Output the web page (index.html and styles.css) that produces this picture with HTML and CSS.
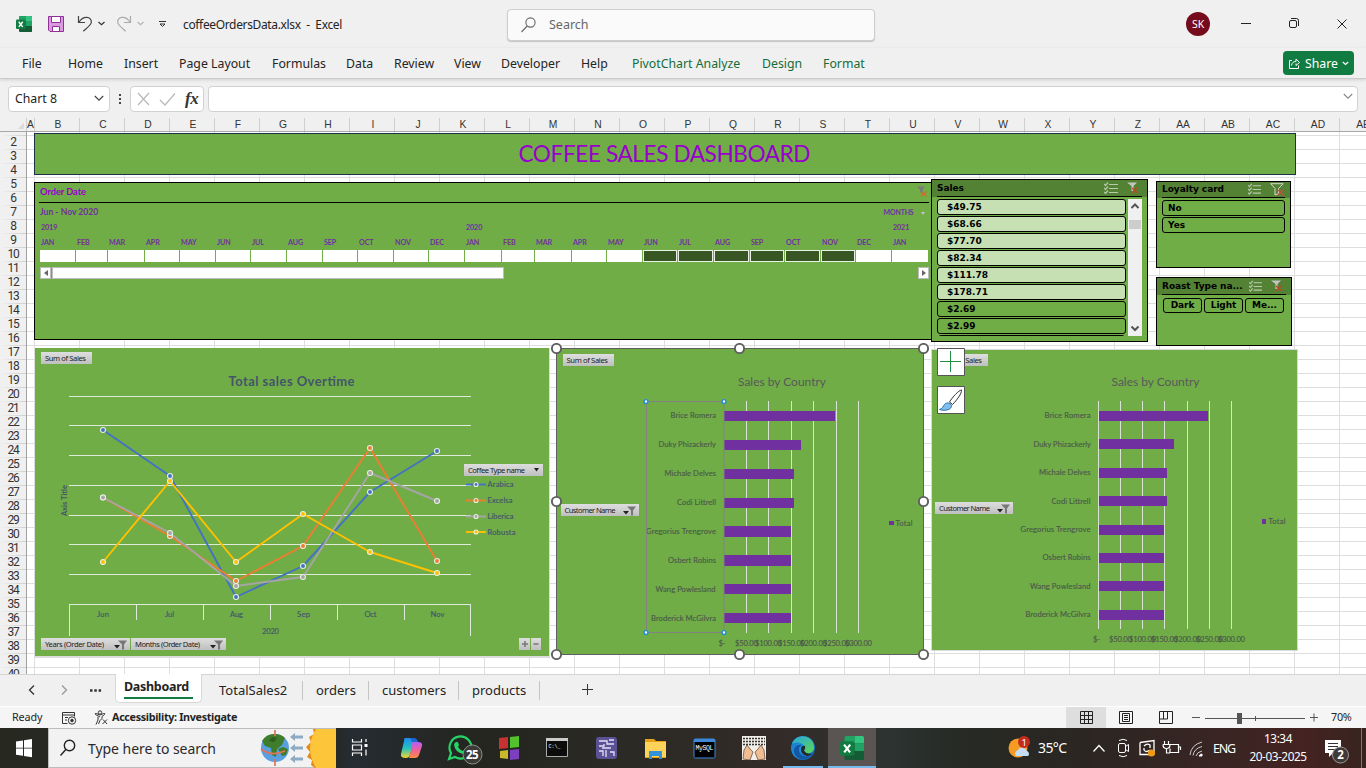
FILE: index.html
```html
<!DOCTYPE html>
<html lang="en">
<head>
<meta charset="utf-8">
<title>coffeeOrdersData.xlsx - Excel</title>
<link rel="stylesheet" href="styles.css">
</head>
<body>
<svg class="defs" width="0" height="0">
  <defs>
    <linearGradient id="btn" x1="0" y1="0" x2="0" y2="1"><stop offset="0" stop-color="#dedede"/><stop offset="1" stop-color="#bfbfbf"/></linearGradient>
    <linearGradient id="edge" x1="0" y1="0" x2="1" y2="1"><stop offset="0" stop-color="#1b6fc9"/><stop offset=".5" stop-color="#1d93dd"/><stop offset="1" stop-color="#0a4f9e"/></linearGradient>
    <linearGradient id="edge2" x1="0" y1="0" x2="1" y2="1"><stop offset="0" stop-color="#25a5e6"/><stop offset="1" stop-color="#5fd94c"/></linearGradient>
    <linearGradient id="cop1" x1="0" y1="0" x2="0" y2="1"><stop offset="0" stop-color="#1f8df0"/><stop offset=".5" stop-color="#22c1c3"/><stop offset="1" stop-color="#f3d42b"/></linearGradient>
    <linearGradient id="cop2" x1="0" y1="0" x2="0" y2="1"><stop offset="0" stop-color="#b65cf5"/><stop offset=".5" stop-color="#f0619c"/><stop offset="1" stop-color="#fb8d3d"/></linearGradient>
    <symbol id="excel" viewBox="0 0 16 16"><path d="M5 0h10a1 1 0 0 1 1 1v14a1 1 0 0 1-1 1H4a1 1 0 0 1-1-1V1z" fill="#185c37"/><path d="M4 0h6v5H3V1a1 1 0 0 1 1-1z" fill="#21a366"/><path d="M10 0h5a1 1 0 0 1 1 1v4h-6z" fill="#33c481"/><path d="M3 5h7v5H3z" fill="#107c41"/><path d="M10 5h6v5h-6z" fill="#21a366"/><path d="M10 10h6v5a1 1 0 0 1-1 1h-5z" fill="#145c36"/><rect y="3.500" width="9.500" height="9.500" rx="1" fill="#107c41"/><path d="M2.700 5.700l4 5.200M6.800 5.700l-4 5.200" stroke="#fff" stroke-width="1.400"/></symbol>
    <symbol id="filt" viewBox="0 0 17 10"><path d="M0 5h6L3 8.500z" fill="#222"/><path d="M4 .5h9L10 4.500v5H8v-5z" fill="#777"/></symbol>
    <symbol id="multi" viewBox="0 0 14 12"><path d="M5 2.500h9M5 6.500h9M5 10.500h9" stroke="#b9c9ad" stroke-width="1.200"/><path d="M0 2l1.500 1.500L4 .5M0 6l1.500 1.500L4 4.500M0 10l1.500 1.500L4 8.500" stroke="#b9c9ad" stroke-width="1.200" fill="none"/></symbol>
    <symbol id="clear" viewBox="0 0 12 12"><path d="M0 .5h10L6.500 4v5h-2V4z" fill="#c4c4c4"/><path d="M5 6l5.500 5M10.500 5.500L5 11" stroke="#c0441f" stroke-width="1.200"/></symbol>
  </defs>
</svg>

<header class="titlebar">
  <svg class="tb-icons" width="170" height="48" viewBox="0 0 170 48" fill="none">
    <use href="#excel" x="16" y="16" width="16" height="16"/>
    <path d="M48.500 16.500h15v15H50l-1.500-1.500z" fill="#dc9be0" stroke="#8f3196"/><path d="M51.500 16.500h9v6h-9z" fill="#fff" stroke="#8f3196"/><path d="M52.500 31.500v-5h7v5z" fill="#fff" stroke="#8f3196"/>
    <path d="M78.500 16v6.500H85M79 22.300c4-7 13-6 12.300.2-.3 2.500-4 5-8 8.700" stroke="#444" stroke-width="1.200"/><path d="M98.500 22l3 2.800 3-2.800" stroke="#333" stroke-width="1.200"/>
    <path d="M130.500 16v6.500H124M130 22.300c-4-7-13-6-12.300.2.300 2.500 4 5 8 8.700" stroke="#aaa" stroke-width="1.200"/><path d="M137.500 22l3 2.800 3-2.800" stroke="#b4b4b4" stroke-width="1.200"/>
    <path d="M159 21.500h7" stroke="#333"/><path d="M160 24l2.500 2.500L165 24z" stroke="#333"/>
  </svg>
  <span class="doc">coffeeOrdersData.xlsx&nbsp; -&nbsp; Excel</span>
  <div class="search"><svg width="16" height="16" viewBox="0 0 16 16" fill="none" stroke="#666" stroke-width="1.100"><circle cx="9.500" cy="5.500" r="4.600"/><path d="M6.200 9L.5 15"/></svg><span>Search</span></div>
  <div class="avatar">SK</div>
  <svg width="120" height="24" viewBox="0 0 120 24" fill="none" stroke="#222"><path d="M5 11.500h10"/><rect x="53.500" y="8.500" width="7" height="7" rx="1.500"/><path d="M55 6.500h5.500q2 0 2 2V14"/><path d="M101.500 7.500l9 9M110.500 7.500l-9 9"/></svg>
</header>

<nav class="ribbon">
  <span>File</span><span>Home</span><span>Insert</span><span>Page Layout</span><span>Formulas</span><span>Data</span><span>Review</span><span>View</span><span>Developer</span><span>Help</span><span class="ctx">PivotChart Analyze</span><span class="ctx">Design</span><span class="ctx">Format</span>
  <button class="share"><svg width="13" height="13" viewBox="0 0 13 13" fill="none" stroke="#fff"><path d="M4 3.500H1.500v8h9v-3"/><path d="M3.500 8.500c.5-3 2-4 4.500-4V2l3.500 3.500L8 8.500v-2"/></svg><span>Share</span><svg width="7" height="5" viewBox="0 0 7 5" fill="none" stroke="#fff" stroke-width="1.200"><path d="M.8 1l2.700 2.500L6.200 1"/></svg></button>
</nav>

<section class="formula">
  <div class="namebox"><span>Chart 8</span><svg width="10" height="7" viewBox="0 0 10 7" fill="none" stroke="#444" stroke-width="1.200"><path d="M.8 1L5 5.200 9.200 1"/></svg></div>
  <div class="dots"><i></i><i></i><i></i></div>
  <div class="fx"><svg width="46" height="16" viewBox="0 0 46 16" fill="none" stroke="#b8b8b8" stroke-width="1.200"><path d="M1 2l11 12M12 2L1 14M23 9l5 5L38 2.500"/></svg><em>fx</em></div>
  <div class="finput"><svg width="10" height="7" viewBox="0 0 10 7" fill="none" stroke="#888" stroke-width="1.100"><path d="M.8 1L5 5.200 9.200 1"/></svg></div>
</section>

<div class="colhead">
  <b class="corner"></b><b class="a">A</b><b>B</b><b>C</b><b>D</b><b>E</b><b>F</b><b>G</b><b>H</b><b>I</b><b>J</b><b>K</b><b>L</b><b>M</b><b>N</b><b>O</b><b>P</b><b>Q</b><b>R</b><b>S</b><b>T</b><b>U</b><b>V</b><b>W</b><b>X</b><b>Y</b><b>Z</b><b>AA</b><b>AB</b><b>AC</b><b>AD</b><b>AE</b>
</div>

<main class="sheet">
  <div class="rowhead">
    <b></b><b>2</b><b>3</b><b>4</b><b>5</b><b>6</b><b>7</b><b>8</b><b>9</b><b>10</b><b>11</b><b>12</b><b>13</b><b>14</b><b>15</b><b>16</b><b>17</b><b>18</b><b>19</b><b>20</b><b>21</b><b>22</b><b>23</b><b>24</b><b>25</b><b>26</b><b>27</b><b>28</b><b>29</b><b>30</b><b>31</b><b>32</b><b>33</b><b>34</b><b>35</b><b>36</b><b>37</b><b>38</b><b>39</b><b>40</b>
  </div>
  <div class="cells"></div>

  <div class="obj banner"><svg width="300" height="34" viewBox="514 137 300 34"><text x="518.500" y="162" textLength="292" font-size="22.600" fill="#9900cc">COFFEE SALES DASHBOARD</text></svg></div>

  <div class="obj timeline">
    <div class="tl-head"><span>Order Date</span><svg width="12" height="12" viewBox="0 0 12 12"><path d="M0 .5h8L5.500 4v4L3 6V4z" fill="#7a7a7a"/><path d="M4 6l5.500 4.500M9.500 5.500L4 10.500" stroke="#cf6a28" stroke-width="1.200"/></svg></div>
    <div class="tl-sub"><span>Jun - Nov 2020</span><span class="lvl">MONTHS <i></i></span></div>
    <div class="months years"><span>2019</span><span class="y20">2020</span><span class="y21">2021</span></div>
    <div class="months names"><span>JAN</span><span>FEB</span><span>MAR</span><span>APR</span><span>MAY</span><span>JUN</span><span>JUL</span><span>AUG</span><span>SEP</span><span>OCT</span><span>NOV</span><span>DEC</span><span>JAN</span><span>FEB</span><span>MAR</span><span>APR</span><span>MAY</span><span>JUN</span><span>JUL</span><span>AUG</span><span>SEP</span><span>OCT</span><span>NOV</span><span>DEC</span><span>JAN</span></div>
    <div class="months tiles"><i></i><i></i><i></i><i></i><i></i><i></i><i></i><i></i><i></i><i></i><i></i><i></i><i></i><i></i><i></i><i></i><i></i><i class="on"></i><i class="on"></i><i class="on"></i><i class="on"></i><i class="on"></i><i class="on"></i><i></i><i class="last"></i></div>
    <div class="tl-scroll"><b class="l"></b><div class="thumb"></div><b class="r"></b></div>
  </div>

  <div class="obj slicer sales">
    <div class="sl-head"><span>Sales</span><svg width="14" height="12"><use href="#multi"/></svg><svg class="f" width="12" height="12"><use href="#clear"/></svg></div>
    <div class="sl-body">
      <ul><li class="lt">$49.75</li><li class="lt">$68.66</li><li class="lt">$77.70</li><li class="lt">$82.34</li><li class="lt">$111.78</li><li class="lt">$178.71</li><li>$2.69</li><li>$2.99</li><li class="cut"></li></ul>
      <div class="sbar"><svg width="14" height="137" viewBox="0 0 14 137" fill="none" stroke="#555" stroke-width="2"><path d="M3.500 9L7 5.500 10.500 9M3.500 127.500L7 131l3.500-3.500"/><path d="M1 21h12v9H1z" fill="#cdcdcd" stroke="none"/></svg></div>
    </div>
  </div>

  <div class="obj slicer loyalty">
    <div class="sl-head"><span>Loyalty card</span><svg width="13" height="12"><use href="#multi"/></svg><svg class="f" width="14" height="13" viewBox="0 0 14 13" fill="none"><path d="M.7.7h12.500L8.500 5.500v5L5 12V5.500z" stroke="#d4d4d4"/><path d="M8 7l5 5M13 7l-5 5" stroke="#cf4a3a" stroke-width="1.200"/></svg></div>
    <ul><li>No</li><li>Yes</li></ul>
  </div>

  <div class="obj slicer roast">
    <div class="sl-head"><span>Roast Type na...</span><svg width="13" height="12"><use href="#multi"/></svg><svg class="f" width="12" height="12"><use href="#clear"/></svg></div>
    <ul><li>Dark</li><li>Light</li><li>Me...</li></ul>
  </div>

  <svg class="obj chart1" width="516" height="310" viewBox="34 348 516 310">
    <path d="M34 348h516v310H34z" fill="#dcdcdc"/><path d="M35 348h514v308H35z" fill="#70ad47"/>
    <path d="M41 352h51v12H41z" fill="url(#btn)"/><text class="pb" x="45" y="361" textLength="41">Sum of Sales</text>
    <text x="228.500" y="386" textLength="126" font-size="13" font-weight="700" fill="#44546a">Total sales Overtime</text>
    <path d="M69 396.500h402M69 425.500h402M69 455.500h402M69 485.500h402M69 515.500h402M69 544.500h402M69 574.500h402M69 604.500h402M69.500 604v32M136.500 604v16M203.500 604v16M270.500 604v16M337.500 604v16M404.500 604v16M470.500 604v32" stroke="#dfeadb" fill="none"/>
    <text transform="translate(66.500 516) rotate(-90)" textLength="31" font-size="7.500" font-weight="700" fill="#44546a">Axis Title</text>
    <g fill="none" stroke-width="1.900" stroke-linejoin="round">
      <path d="M103 430L170 476 236 597 303 566 370 492 437 451" stroke="#4472c4"/>
      <path d="M103 497.500L170 536 236 581 303 546 370 448 437 561" stroke="#ed7d31"/>
      <path d="M103 497.500L170 533 236 586 303 577 370 473 437 501" stroke="#a5a5a5"/>
      <path d="M103 562L170 481 236 562 303 514 370 552 437 573" stroke="#ffc000"/>
      <path d="M466 484.500h20" stroke="#4472c4"/><path d="M466 500.500h20" stroke="#ed7d31"/><path d="M466 516.500h20" stroke="#a5a5a5"/><path d="M466 532h20" stroke="#ffc000"/>
    </g>
    <g stroke="#e8eee4" stroke-width="1.100">
      <g fill="#4472c4"><circle cx="103" cy="430" r="2.500"/><circle cx="170" cy="476" r="2.500"/><circle cx="236" cy="597" r="2.500"/><circle cx="303" cy="566" r="2.500"/><circle cx="370" cy="492" r="2.500"/><circle cx="437" cy="451" r="2.500"/><circle cx="476" cy="484.500" r="2"/></g>
      <g fill="#ed7d31"><circle cx="103" cy="497.500" r="2.500"/><circle cx="170" cy="536" r="2.500"/><circle cx="236" cy="581" r="2.500"/><circle cx="303" cy="546" r="2.500"/><circle cx="370" cy="448" r="2.500"/><circle cx="437" cy="561" r="2.500"/><circle cx="476" cy="500.500" r="2"/></g>
      <g fill="#a5a5a5"><circle cx="103" cy="497.500" r="2.500"/><circle cx="170" cy="533" r="2.500"/><circle cx="236" cy="586" r="2.500"/><circle cx="303" cy="577" r="2.500"/><circle cx="370" cy="473" r="2.500"/><circle cx="437" cy="501" r="2.500"/><circle cx="476" cy="516.500" r="2"/></g>
      <g fill="#ffc000"><circle cx="103" cy="562" r="2.500"/><circle cx="170" cy="481" r="2.500"/><circle cx="236" cy="562" r="2.500"/><circle cx="303" cy="514" r="2.500"/><circle cx="370" cy="552" r="2.500"/><circle cx="437" cy="573" r="2.500"/><circle cx="476" cy="532" r="2"/></g>
    </g>
    <g class="ax blue"><text x="97" y="617" textLength="12">Jun</text><text x="165" y="617" textLength="9">Jul</text><text x="230" y="617" textLength="13">Aug</text><text x="297" y="617" textLength="13">Sep</text><text x="364.500" y="617" textLength="12">Oct</text><text x="430.500" y="617" textLength="14">Nov</text><text x="262" y="634" textLength="17">2020</text>
    <text x="487.500" y="487" textLength="26">Arabica</text><text x="487.500" y="503" textLength="25">Excelsa</text><text x="487.500" y="519" textLength="26">Liberica</text><text x="487.500" y="534.500" textLength="28">Robusta</text></g>
    <path d="M464 464h79v12h-79z" fill="url(#btn)"/><text class="pb" x="468" y="473" textLength="57">Coffee Type name</text><path d="M534 468h5l-2.500 3.500z" fill="#222"/>
    <path d="M41 638h89v12H41zM131 638h95v12h-95zM519 638h11v12h-11zM531 638h10v12h-10z" fill="url(#btn)"/>
    <text class="pb" x="45" y="647" textLength="59">Years (Order Date)</text><text class="pb" x="135" y="647" textLength="65">Months (Order Date)</text>
    <use href="#filt" x="114" y="640" width="17" height="10"/><use href="#filt" x="210" y="640" width="17" height="10"/>
    <path d="M522 644h6M525 641v6M533.500 644h5" stroke="#777" stroke-width="1.500"/>
  </svg>

  <svg class="obj chart3" width="367" height="302" viewBox="931 349 367 302">
    <path d="M931.500 349.500h366v301h-366z" fill="#70ad47" stroke="#d9d9d9"/>
    <path d="M937 354h51v12h-51z" fill="url(#btn)"/><text class="pb" x="941" y="363" textLength="41">Sum of Sales</text>
    <text x="1111.500" y="386" textLength="88" font-size="12" fill="#595959">Sales by Country</text>
    <path d="M1098.500 401v228M1120.500 401v228M1142.500 401v228M1164.500 401v228M1187.500 401v228M1209.500 401v228M1231.500 401v228" stroke="#d9e2d3"/>
    <path d="M1099 411h109v10h-109zM1099 439h75v10h-75zM1099 468h68v10h-68zM1099 496h68v10h-68zM1099 525h65v10h-65zM1099 553h65v10h-65zM1099 581h65v10h-65zM1099 610h65v10h-65z" fill="#7030a0"/>
    <g class="ax"><text x="1044.500" y="418" textLength="46">Brice Romera</text><text x="1033.500" y="447" textLength="57.500">Duky Phizackerly</text><text x="1039" y="475" textLength="51.500">Michale Delves</text><text x="1051.500" y="504" textLength="39">Codi Littrell</text><text x="1020.500" y="532" textLength="70">Gregorius Trengrove</text><text x="1042.500" y="560" textLength="48">Osbert Robins</text><text x="1030" y="589" textLength="60.500">Wang Powlesland</text><text x="1025.500" y="617" textLength="65">Broderick McGilvra</text>
    <text x="1093" y="642" textLength="7">$-</text><text x="1109" y="642" textLength="23">$50.00</text><text x="1129" y="642" textLength="27">$100.00</text><text x="1151" y="642" textLength="27">$150.00</text><text x="1174" y="642" textLength="27">$200.00</text><text x="1196" y="642" textLength="27">$250.00</text><text x="1218" y="642" textLength="27">$300.00</text><text x="1268.500" y="524" textLength="17">Total</text></g>
    <path d="M1262 519h4v5h-4z" fill="#7030a0"/>
    <path d="M935 502h78v12h-78z" fill="url(#btn)"/><text class="pb" x="939" y="511" textLength="51">Customer Name</text><use href="#filt" x="997" y="504" width="17" height="10"/>
  </svg>

  <svg class="obj chart2" width="378" height="317" viewBox="551 343 378 317">
    <path d="M556.500 348.500h367v306h-367z" fill="#70ad47" stroke="#5f5f5f"/>
    <path d="M563 354h51v12h-51z" fill="url(#btn)"/><text class="pb" x="566.500" y="363" textLength="41.500">Sum of Sales</text>
    <text x="738" y="386" textLength="88" font-size="12" fill="#595959">Sales by Country</text>
    <path d="M746.500 401v232M768.500 401v232M791.500 401v232M813.500 401v232M836.500 401v232M858.500 401v232" stroke="#d9e2d3"/>
    <path d="M724 411h111v10h-111zM724 440h77v10h-77zM724 469h70v10h-70zM724 498h70v10h-70zM724 526h67v11h-67zM724 555h67v11h-67zM724 584h67v10h-67zM724 613h67v10h-67z" fill="#7030a0"/>
    <g class="ax"><text x="670.500" y="418" textLength="45.500">Brice Romera</text><text x="658.500" y="447" textLength="57.500">Duky Phizackerly</text><text x="664.500" y="476" textLength="51.500">Michale Delves</text><text x="677" y="505" textLength="39">Codi Littrell</text><text x="646" y="534" textLength="70">Gregorius Trengrove</text><text x="668" y="563" textLength="48">Osbert Robins</text><text x="655.500" y="592" textLength="60">Wang Powlesland</text><text x="651" y="621" textLength="65">Broderick McGilvra</text>
    <text x="718.500" y="646" textLength="7">$-</text><text x="735" y="646" textLength="23">$50.00</text><text x="755" y="646" textLength="27">$100.00</text><text x="778" y="646" textLength="27">$150.00</text><text x="800" y="646" textLength="27">$200.00</text><text x="823" y="646" textLength="27">$250.00</text><text x="845" y="646" textLength="27">$300.00</text><text x="895.500" y="526" textLength="17">Total</text></g>
    <path d="M889 521h5v4h-5z" fill="#7030a0"/>
    <path d="M561 504h78v12h-78z" fill="url(#btn)"/><text class="pb" x="564.500" y="513" textLength="51">Customer Name</text><use href="#filt" x="623" y="506" width="17" height="10"/>
    <path d="M646.500 401.500h77.500v231h-77.500z" fill="none" stroke="#828282"/>
    <g fill="#fff" stroke="#1e8bd8" stroke-width="1.400"><circle cx="646" cy="401.500" r="1.900"/><circle cx="724" cy="401.500" r="1.900"/><circle cx="646" cy="632.500" r="1.900"/><circle cx="724" cy="632.500" r="1.900"/></g>
    <g fill="#fff" stroke="#5f5f5f" stroke-width="1.900"><circle cx="556.500" cy="348.500" r="4.600"/><circle cx="739.500" cy="348.500" r="4.600"/><circle cx="923.500" cy="348.500" r="4.600"/><circle cx="556.500" cy="501.500" r="4.600"/><circle cx="923.500" cy="501.500" r="4.600"/><circle cx="556.500" cy="654.500" r="4.600"/><circle cx="739.500" cy="654.500" r="4.600"/><circle cx="923.500" cy="654.500" r="4.600"/></g>
  </svg>

  <div class="obj chart-tools">
    <svg width="28" height="28" viewBox="0 0 28 28"><path d="M.5.5h27v27H.5z" fill="#fff" stroke="#555"/><path d="M3 13.500h21M13.500 3v21" stroke="#1e8f45"/></svg>
    <svg width="28" height="28" viewBox="0 0 28 28"><path d="M.5.5h27v27H.5z" fill="#fff" stroke="#555"/><path d="M24.500 4c-3 .5-9 7-12 12l3 2.500c4-4 9.500-11 9-14.500z" fill="#fff" stroke="#333"/><path d="M2.500 23.500c3-1 3.500-3 5-5 2-3 7.500-1.500 7 2-1 4-8 4.500-12 3z" fill="#83bdec" stroke="#2672ae"/></svg>
  </div>
</main>

<section class="tabs">
  <svg width="115" height="31" viewBox="0 0 115 31" fill="none" stroke="#333" stroke-width="1.300"><path d="M34 10.500L29.500 15l4.500 4.500"/><path d="M62 10.500l4.500 4.500-4.500 4.500" stroke="#999"/><path d="M90 15.500h2.500M94.300 15.500h2.500M98.600 15.500h2.500" stroke-width="2.500"/></svg>
  <div class="tab active"><span>Dashboard</span></div>
  <div class="tab t1">TotalSales2</div><div class="tab t2">orders</div><div class="tab t3">customers</div><div class="tab t4">products</div>
  <svg class="plus" width="12" height="12" viewBox="0 0 12 12" stroke="#333"><path d="M0 5.500h11M5.500 0v11"/></svg>
</section>

<footer class="status">
  <span class="ready">Ready</span>
  <svg class="rec" width="15" height="14" viewBox="0 0 15 14" fill="none" stroke="#333"><path d="M5.500 12.500h-5v-11h12v4M.5 4h12M3 6.500h3M3 9h2"/><circle cx="10" cy="9.500" r="3.700"/><circle cx="10" cy="9.500" r="1.300" fill="#333"/></svg>
  <svg class="acc" width="15" height="15" viewBox="0 0 15 15" fill="none" stroke="#333"><circle cx="6" cy="2.500" r="1.700"/><path d="M6 7L1.500 4.500q-1-1.500 1-1L6 5l3.500-1.500q2-.5 1 1L8 6.500v2M4 7v3l-2 4.500M8 8.500l-2 2-1.500 3.500M9 9.500l4 4.500M13 9.500L8.500 14"/></svg>
  <span class="inv">Accessibility: Investigate</span>
  <div class="views">
    <span class="v on"><svg width="13" height="13" viewBox="0 0 13 13" fill="none" stroke="#222"><path d="M.5.5h12v12H.5zM.5 4.500h12M.5 8.500h12M4.500.5v12M8.500.5v12"/></svg></span>
    <span class="v"><svg width="14" height="13" viewBox="0 0 14 13" fill="none" stroke="#222"><path d="M.5.5h13v12H.5zM3.500 2.500h7v8h-7zM5 4.500h4M5 6.500h4M5 8.500h4"/></svg></span>
    <span class="v"><svg width="14" height="13" viewBox="0 0 14 13" fill="none" stroke="#222"><path d="M.5.5h13v12H.5zM.5 8h8V.5M4.500 .5V8"/></svg></span>
  </div>
  <svg class="zoombar" width="132" height="16" viewBox="0 0 132 16"><path d="M4 7.500h8M17 8.500h100M122 7.500h8M126 3.500v8M67.500 6v5" stroke="#555"/><path d="M49 3h5v11h-5z" fill="#555"/></svg>
  <span class="pct">70%</span>
</footer>

<section class="taskbar">
  <svg class="win" width="48" height="40" viewBox="0 0 48 40" fill="#fff"><path d="M16 13.500l7-1v7.200h-7zM24 12.300l8-1.300v8.700h-8zM16 20.600h7v7.200l-7-1zM24 20.600h8v8.700l-8-1.300z"/></svg>
  <div class="tsearch">
    <svg width="18" height="18" viewBox="0 0 18 18" fill="none" stroke="#222" stroke-width="1.400"><circle cx="10.500" cy="6.500" r="5.200"/><path d="M6.800 10.500L1.500 16.500"/></svg>
    <span>Type here to search</span>
    <svg class="globe" width="78" height="39" viewBox="0 0 78 39"><circle cx="17" cy="19" r="14" fill="#5aa0e0"/><path d="M17 5a14 14 0 0 1 10 4l-3 7-5 4-1 8-4-2-1-7-6-2-3-5A14 14 0 0 1 17 5zM20 20l5-2 5 2-2 6-4 1z" fill="#3f7d2b"/><path d="M14 8l5 1-3 4-5-1z" fill="#2e5f22"/><path d="M3 20q10 8 24 2" fill="none" stroke="#e0745b" stroke-width="1.700"/><path d="M17 1v6M17 30v7" stroke="#e0745b" stroke-width="1.700"/><path d="M32 8l5-4v2.500h8v3h-8V12zM32 19l5-4v2.500h8v3h-8V23zM32 30l5-4v2.500h8v3h-8V34z" fill="#8eabc4"/><path d="M78 0H55l1 5-5 3 2 5-5 5 4 5-3 5 5 3-1 5 4 3h21z" fill="#e58a1a"/><path d="M78 0H58Q46 19 58 39h20z" fill="#fdc53a"/></svg>
  </div>
  <svg class="apps" width="540" height="40" viewBox="336 0 540 40">
    <path d="M828 0h48v40h-48z" fill="#5a5552"/>
    <g fill="none" stroke="#fff" stroke-width="1.200"><path d="M352.500 11v3h9v-3M352.500 28v-3h9v3M352.500 17h9v5h-9zM366 11v3M366 21.500v6"/></g><path d="M364.500 16h3v3h-3z" fill="#fff"/>
    <path d="M405 10h7q3 0 2 3l-4 14q-1 3-4 3-6 0-5-4l3-13q0-3 1-3z" fill="url(#cop1)"/><path d="M413 14h5q5 0 4 4l-3 9q-1 3-4 3h-6l3-11q0-5 1-5z" fill="url(#cop2)"/><path d="M410 10h4q3 0 4 4h-6z" fill="#1e66cf"/>
    <path d="M449 31l2-6a11 11 0 1 1 4 4z" fill="none" stroke="#25d366" stroke-width="2.200"/><path d="M456 14q2-1 3 3l-1 2q2 3 5 4l2-2 3 2q-1 4-5 3-8-2-9-9 0-2 2-3z" fill="#25d366"/><circle cx="472.500" cy="26.500" r="9.500" fill="#3a3b36" stroke="#8d8e8a"/><text x="466" y="31" font-size="11.500" class="bw">25</text>
    <path d="M499 10l9-1v11l-9 1z" fill="#c63232"/><path d="M510 9l9-1v11l-9 1z" fill="#54c22c"/><path d="M500 23l8-1v9l-8-1z" fill="#c9b92c"/><path d="M510 22l9-1v10l-9 1z" fill="#7b3fc0"/>
    <path d="M546.500 10.500h21v18h-21z" fill="#0c0c0c" stroke="#aaa"/><path d="M546 10h22v3h-22z" fill="#ccc"/><text x="548.500" y="19.500" font-size="5" class="mw">C:\_</text>
    <rect x="596" y="9" width="21" height="22" rx="3" fill="#5b5195"/><path d="M599 13h8v3h7M599 18h5v-2M602 20h9M599 23h4v5M606 22v7M610 24h4v4M609 12h5" stroke="#e6dff8" stroke-width="1.300" fill="none"/>
    <path d="M645 11h9l2 2h10v17h-21z" fill="#e3a21a"/><path d="M645 14h21v15h-21z" fill="#ffd35a"/><path d="M649 31v-8h13v8h-3v-3h-7v3z" fill="#3292dc"/>
    <rect x="694" y="11" width="21" height="19" rx="1.500" fill="#000" stroke="#3f8ad8"/><path d="M694 11h21v3h-21z" fill="#3f8ad8"/><text x="695.500" y="22" font-size="6.500" class="mw" textLength="18">MySQL</text>
    <path d="M742 8h24v24h-24z" fill="#f2eee9"/><path d="M743 10.500h22M743 13.500h22M743 16.500h22" stroke="#333" stroke-width="1.500" stroke-dasharray="2 1"/><path d="M743 31l1-9 3-5 3 4 3 3-3 8zM765 31l-1-9-3-5-3 4-3 3 3 8z" fill="#f0bd93" stroke="#594034" stroke-width=".7"/>
    <circle cx="803" cy="20" r="12" fill="url(#edge)"/><path d="M792 16c3-10 19-11 22 2 1 6-4 8-8 7-3-1-2-3-1-4 0-7-9-8-13-5z" fill="url(#edge2)"/><path d="M799 21c0 6 5 9 11 7-5 6-15 3-16-4-1-5 4-8 8-7-2 1-3 2-3 4z" fill="#1557a5"/><path d="M801 20q1-3 4-2 1 2-1 4 1 4 8 4-2 2-5 2-7-2-6-8z" fill="#272a28"/>
    <use href="#excel" x="840" y="8" width="24" height="24"/>
    <path d="M783 38h40v2h-40zM828 38h48v2h-48z" fill="#76b9ed"/>
  </svg>
  <svg class="tray" width="240" height="40" viewBox="1000 0 240 40" fill="none" stroke="#fff">
    <g stroke="none"><circle cx="1018" cy="20" r="9.500" fill="#f59a23"/><path d="M1016 28a5 4 0 0 1 2-6 5 5 0 0 1 9 1 3 3 0 0 1 1 5z" fill="#c5dcf5"/><circle cx="1024" cy="14" r="6" fill="#c42b1c"/><text x="1021.500" y="17.500" font-size="9.500" fill="#fff">1</text><text x="1038" y="25" font-size="14" fill="#fff" textLength="29">35°C</text></g>
    <path d="M1093.500 23.500l5.500-6 5.500 6" stroke-width="1.300"/>
    <rect x="1118.500" y="15.500" width="7" height="9" rx="1.500"/><path d="M1125.500 18.500l3-2v7l-3-2M1119 12.500q4-2.500 8 0M1119 27.500q4 2.500 8 0"/>
    <path d="M1140 14.500l14-2v14M1140 14.500v12h9M1144 18q3-3 6-1v3M1150 22q-4 3-6 0v-2" stroke-width="1.300"/><circle cx="1151.500" cy="25" r="3.500" fill="#f59a0c" stroke="none"/>
    <path d="M1169 16.500h9.500v8H1170v-4M1179 19h1.500v3M1164.500 13v3M1168.500 13v3M1163 16.500h7q0 4-3.500 4t-3.500-4M1166.500 20v5h3.500" stroke-width="1.200"/>
    <path d="M1190 27Q1191 17 1202 14M1193 27.500q1-7 9-9M1196 28q1-4 6-5" stroke="#ccc"/><path d="M1199 28q1-2 3-2v2z" fill="#fff"/>
    <text x="1213" y="24.500" font-size="12.500" stroke="none" fill="#fff" textLength="23">ENG</text>
  </svg>
  <div class="clock"><span>13:34</span><span>20-03-2025</span></div>
  <svg class="note" width="45" height="40" viewBox="1321 0 45 40"><path d="M1325 12h16v13h-8l-4 4v-4h-4z" fill="#fff"/><path d="M1328 15.500h10M1328 18.500h10M1328 21.500h7" stroke="#333"/><circle cx="1340.500" cy="27" r="8" fill="#3f3937" stroke="#999"/><text x="1337.300" y="31.300" font-size="11.500" class="bw">2</text><path d="M1361.500 0v40" stroke="#777"/></svg>
</section>
</body>
</html>
```
FILE: styles.css
```css
* { box-sizing: border-box; }
body { margin: 0; width: 1366px; height: 768px; overflow: hidden; display: flex; flex-direction: column; background: #f0f0f0; font-family: "Noto Sans", "Open Sans", sans-serif; font-size: 12.3px; color: #242424; }
.defs { position: absolute; }
svg { display: block; flex: none; }
ul { list-style: none; margin: 0; padding: 0; }

/* title bar */
.titlebar { height: 48px; flex: none; display: flex; align-items: center; }
.doc { width: 324px; margin-left: 13px; font-size: 12px; letter-spacing: -.35px; white-space: nowrap; padding-top: 1px; }
.search { width: 368px; height: 32px; margin-top: 1px; display: flex; align-items: center; gap: 12px; padding-left: 13px; background: #fafafa; border: 1px solid #cdcdcd; border-radius: 4px; box-shadow: 0 1px 1px #c4c4c4; color: #666; font-size: 12.5px; }
.avatar { width: 24px; height: 24px; margin: 0 26px 0 311px; border-radius: 50%; background: #750b1c; color: #fff; font-size: 10.500px; line-height: 24px; text-align: center; letter-spacing: -.2px; }

/* ribbon tabs */
.ribbon { height: 31px; flex: none; padding-left: 22px; display: grid; grid-template-columns: 46px 56px 55px 93px 74px 48px 60px 47px 80px 51px 130px 61px 460px 71px; align-items: center; white-space: nowrap; border-bottom: 1px solid #cbcbcb; box-shadow: 0 1px 3px #d0d0d0; }
.ctx { color: #146c3a; }
.share { height: 24px; width: 71px; padding: 0 5px; border: 0; border-radius: 4px; background: #107c41; color: #fff; font: 12.300px "Noto Sans", sans-serif; display: flex; align-items: center; justify-content: space-between; }

/* formula bar */
.formula { height: 39px; flex: none; display: flex; align-items: center; padding: 0 8px; }
.namebox, .fx, .finput { height: 26px; background: #fff; border: 1px solid #d1d1d1; border-radius: 4px; display: flex; align-items: center; }
.namebox { width: 102px; padding: 0 5px 0 6px; justify-content: space-between; }
.dots { width: 20px; display: flex; flex-direction: column; gap: 2px; align-items: center; }
.dots i { width: 2px; height: 2px; background: #444; }
.fx { width: 74px; padding-left: 6px; }
.fx em { font: italic 700 17px/20px "Liberation Serif", serif; color: #333; margin-left: 2px; letter-spacing: -.5px; }
.finput { flex: 1; margin-left: 4px; justify-content: flex-end; padding: 0 4px 4px 0; }

/* sheet headers */
.colhead { height: 14px; flex: none; display: flex; border-bottom: 1px solid #a8a8a8; overflow: hidden; }
.colhead b { flex: none; width: 45px; padding-left: 2px; font: 10.300px/13px "Liberation Sans", sans-serif; text-align: center; color: #333; border-right: 1px solid #cfcfcf; }
.colhead .a { width: 8px; padding: 0; }
.colhead .corner { width: 27px; background: linear-gradient(135deg, transparent 50%, #dcdcdc 50%) 17px 5px / 7px 6px no-repeat; }
.sheet { height: 542px; flex: none; position: relative; display: flex; overflow: hidden; }
.rowhead { width: 27px; border-right: 1px solid #a0a0a0; }
.rowhead b { display: block; height: 14px; font: 12px/13px Roboto, sans-serif; letter-spacing: -1.300px; text-align: center; color: #333; background: linear-gradient(90deg, #f0f0f0, #cfcfcf) 0 13px / 100% 1px no-repeat; }
.rowhead b:first-child { height: 4px; background-position: 0 3px; }
.cells { flex: 1; background: linear-gradient(90deg, #dedede 1px, transparent 1px) 7px 0 / 45px 100%, linear-gradient(#dedede 1px, transparent 1px) 0 3px / 100% 14px, #fff; }

/* objects placed freely over the sheet */
.obj { position: absolute; font-family: Lato, sans-serif; }
.banner { left: 34px; top: 1px; width: 1262px; height: 42px; border: 1px solid #1c3152; background: #70ad47; }
.banner svg { margin: 3px 0 0 479px; }
.timeline { left: 34px; top: 50px; width: 900px; height: 158px; border: 1px solid #000; background: #70ad47; padding-left: 4px; color: #7030a0; font-weight: 700; }
.tl-head { width: 890px; height: 20px; display: flex; justify-content: space-between; padding: 3px 0 0 1px; border-bottom: 1px solid #000; color: #9900cc; font-size: 9.400px; line-height: 12px; letter-spacing: -.1px; }
.tl-sub { width: 890px; height: 18px; display: flex; justify-content: space-between; padding: 0 4px 0 1px; font-size: 8.600px; line-height: 18px; }
.lvl { font-size: 7px; letter-spacing: -.2px; }
.lvl i { display: inline-block; margin-left: 6px; border: 2.500px solid transparent; border-top: 3px solid #c4c4c4; border-bottom: 0; }
.months { display: grid; margin-left: 1px; grid-template-columns: 36px 32px 37px 35px 36px 35px 36px 36px 35px 36px 35px 36px 37px 33px 37px 35px 36px 35px 36px 36px 35px 36px 35px 36px 36px; }
.years, .names { font-size: 7.200px; letter-spacing: -.12px; text-indent: 1px; }
.years { height: 14px; line-height: 14px; }
.y20 { grid-column: 13; }
.y21 { grid-column: 25; }
.names { height: 15px; line-height: 16px; }
.tiles i { height: 12px; background: #fff; border-right: 1px solid #70ad47; }
.tiles .last { border: 0; }
.tiles .on { background: #375623; box-shadow: inset 0 0 0 1px #e9f1e4; margin-right: 1px; border: 0; }
.tl-scroll { display: flex; width: 890px; height: 12px; margin: 5px 0 0 1px; }
.tl-scroll b { width: 11px; background: #fff; border: 1px solid #bcbcbc; display: flex; align-items: center; justify-content: center; }
.tl-scroll b::before { content: ""; border: 3px solid transparent; }
.tl-scroll .l::before { border-right: 4px solid #666; border-left: 0; }
.tl-scroll .r::before { border-left: 4px solid #666; border-right: 0; }
.thumb { width: 452px; background: #fff; border: 1px solid #bcbcbc; margin: 0 414px 0 1px; }

.slicer { border: 1px solid #000; background: #70ad47; font: 700 9px "DejaVu Sans", sans-serif; color: #000; }
.sl-head { display: flex; align-items: center; background: #548235; padding: 0 6px 2px 0; margin-bottom: 2px; position: relative; letter-spacing: -.05px; }
.sl-head span { flex: 1; padding-left: 5px; white-space: nowrap; }
.sl-head::after { content: ""; position: absolute; left: 5px; right: 5px; bottom: 0; height: 1px; background: #000; }
.sl-head .f { margin-left: 9px; }
.slicer li { height: 16px; line-height: 14px; border: 1px solid #000; border-radius: 3px; margin-bottom: 1px; }
.slicer .lt { background: #c6e0b4; }
.sales { left: 931px; top: 47px; width: 217px; height: 163px; }
.sales .sl-head { height: 17px; padding-right: 8px; }
.sl-body { display: flex; padding-left: 5px; gap: 2px; }
.sl-body ul { width: 189px; height: 137px; overflow: hidden; }
.sl-body li { padding-left: 9px; }
.sl-body .cut { margin: 0 1px; }
.sbar { width: 14px; height: 137px; background: #f0f0f0; }
.loyalty { left: 1156px; top: 49px; width: 135px; height: 87px; }
.loyalty .sl-head { height: 16px; }
.loyalty ul { padding: 0 5px; }
.loyalty li { padding-left: 5px; }
.roast { left: 1156px; top: 145px; width: 136px; height: 69px; }
.roast .sl-head { height: 17px; padding-right: 8px; margin-bottom: 3px; }
.roast ul { display: flex; gap: 2px; padding-left: 6px; }
.roast li { width: 39px; height: 15px; line-height: 13px; text-align: center; letter-spacing: -.1px; }
.chart1 { left: 34px; top: 216px; }
.chart2 { left: 551px; top: 211px; }
.chart3 { left: 931px; top: 217px; }
.chart-tools { left: 937px; top: 216px; display: flex; flex-direction: column; gap: 10px; }
.ax { font-size: 7.600px; fill: #4c5a48; stroke: #4c5a48; stroke-width: .15px; }
.ax.blue { fill: #44566a; stroke: #44566a; }
.pb { font: 7.600px "Noto Sans", sans-serif; fill: #222; }

/* sheet tabs */
.tabs { height: 32px; flex: none; display: flex; border-top: 1px solid #d4d4d4; font-size: 13px; }
.tab { height: 19px; line-height: 18px; margin-top: 6px; padding-left: 13px; border-right: 1px solid #c4c4c4; }
.tab.active { width: 87px; height: 29px; margin: -1px 4px 0 0; padding: 4px 9px 0 8px; background: #fff; border: 1px solid #d8d8d8; border-top: 0; border-radius: 0 0 5px 5px; font-weight: 700; font-size: 12.500px; }
.tab.active span { display: block; width: 69px; height: 21px; line-height: 18px; letter-spacing: -.3px; border-bottom: 2px solid #107c41; }
.t1 { width: 97px; } .t2 { width: 66px; } .t3 { width: 90px; } .t4 { width: 81px; }
.plus { margin: 9px 0 0 42px; }

/* status bar */
.status { height: 22px; flex: none; display: flex; align-items: center; background: #f5f5f5; border-top: 1px solid #fff; font-size: 10.800px; line-height: 19px; }
.ready { width: 50px; padding: 0 0 2px 12px; letter-spacing: -.1px; }
.rec { margin-left: 12px; }
.acc { margin-left: 17px; }
.inv { flex: 1; margin-left: 3px; padding-bottom: 2px; font-weight: 700; letter-spacing: -.34px; }
.views { display: flex; height: 21px; }
.v { width: 40px; display: flex; align-items: center; justify-content: center; }
.v.on { background: #dedede; }
.zoombar { margin-left: 2px; }
.pct { width: 46px; padding: 0 0 2px 11px; letter-spacing: -.3px; }

/* taskbar */
.taskbar { height: 40px; flex: none; display: flex; background: linear-gradient(90deg, #272820 0, #25261f 330px, #262c31 350px, #24251f 480px, #2b2a25 620px, #332b28 780px, #2c3432 880px, #272a25 960px, #2b2622 1080px, #3a2523 1230px, #442321 1300px, #38241f 1366px); color: #fff; }
.tsearch { width: 288px; background: #f2f2f2; border: 1px solid #bdbdbd; border-width: 1px 0 1px 1px; display: flex; align-items: center; color: #2a2a2a; font-size: 14px; padding-left: 10px; }
.tsearch span { width: 173px; margin-left: 11px; letter-spacing: -.05px; white-space: nowrap; }
.globe { margin-left: auto; }
.apps { margin-right: 124px; }
.clock { width: 81px; display: flex; flex-direction: column; align-items: center; font-size: 11.800px; line-height: 18px; padding: 1px 5px 0 0; letter-spacing: -.45px; white-space: nowrap; }
.bw { fill: #fff; font-weight: 700; letter-spacing: -.5px; }
.mw { fill: #fff; font-family: "Liberation Mono", monospace; }
```
